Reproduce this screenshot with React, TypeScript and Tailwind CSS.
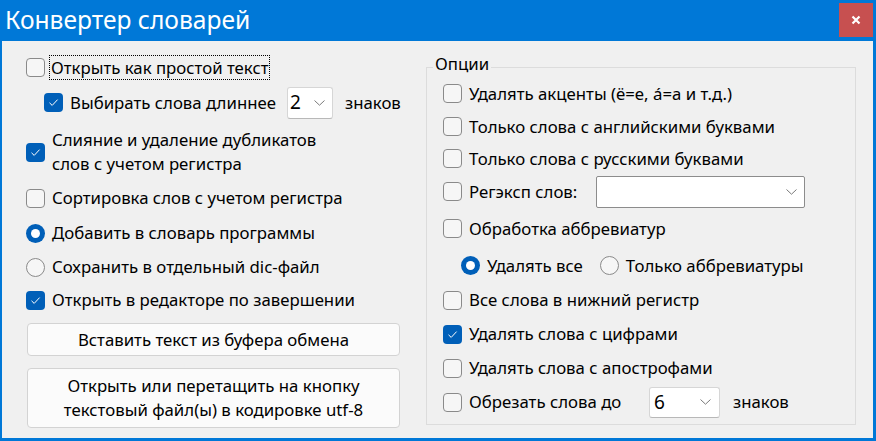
import React from "react"

const font = { fontFamily: '"Noto Sans", "Open Sans", sans-serif' }

function CheckBox({ checked = false }: { checked?: boolean }) {
  if (checked) {
    return (
      <span className="flex h-[19px] w-[19px] shrink-0 items-center justify-center rounded-[4px] bg-[#005fb8]">
        <svg width="11" height="9" viewBox="0 0 11 9" fill="none">
          <path d="M1.5 4.8 L4.2 7.4 L9.6 1.6" stroke="white" strokeWidth="1" />
        </svg>
      </span>
    )
  }
  return <span className="block h-[19px] w-[19px] shrink-0 rounded-[4px] border border-[#8a8a8a] bg-[#f6f6f6]" />
}

function Radio({ checked = false }: { checked?: boolean }) {
  if (checked) {
    return (
      <span className="flex h-[19px] w-[19px] shrink-0 items-center justify-center rounded-full bg-[#005fb8]">
        <span className="block h-[9px] w-[9px] rounded-full bg-white" />
      </span>
    )
  }
  return <span className="block h-[19px] w-[19px] shrink-0 rounded-full border border-[#8a8a8a] bg-[#f6f6f6]" />
}

function Chevron() {
  return (
    <svg width="11" height="6" viewBox="0 0 11 6" fill="none">
      <path d="M0.5 0.5 L5.5 5.2 L10.5 0.5" stroke="#7a7a7a" strokeWidth="1" />
    </svg>
  )
}

function Row({ h, children, className = "" }: { h: string; children: React.ReactNode; className?: string }) {
  return <div className={`flex items-center ${h} ${className}`}>{children}</div>
}

export default function App() {
  return (
    <div className="h-[441px] w-[876px] overflow-hidden bg-[#0078d7] text-[16.8px] text-black" style={font}>
      {/* title bar */}
      <div className="flex h-[41px] items-start justify-between">
        <div className="pl-[5px] pt-[3px] text-[24.6px] leading-[34px] text-white">Конвертер словарей</div>
        <div className="mr-[3px] mt-[3px] flex h-[34px] w-[34px] items-center justify-center bg-[#c75050]">
          <svg width="10" height="10" viewBox="0 0 10 10">
            <path d="M1.5 1.5 L8.5 8.5 M8.5 1.5 L1.5 8.5" stroke="white" strokeWidth="2.2" />
          </svg>
        </div>
      </div>

      {/* body */}
      <div className="ml-[2px] mr-[3px] flex h-[397px] bg-[#f0f0f0]">
        {/* left column */}
        <div className="flex w-[424px] flex-col pl-[24px]">
          <Row h="h-[25px] mt-[14px]" className="gap-[4px]">
            <CheckBox />
            <span className="border border-dotted border-black px-[1px] leading-[23px]">Открыть как простой текст</span>
          </Row>
          <Row h="h-[33px] mt-[6px]" className="pl-[18px]">
            <CheckBox checked />
            <span className="ml-[7px]">Выбирать слова длиннее</span>
            <div className="ml-[11px] flex h-[32px] w-[46px] items-center justify-between rounded-[3px] border border-[#d6d6d6] border-b-[#b8b8b8] bg-white pl-[2px] pr-[7px] text-[19px]">
              <span>2</span>
              <Chevron />
            </div>
            <span className="ml-[12px]">знаков</span>
          </Row>
          <Row h="h-[48px] mt-[9px]" className="gap-[7px]">
            <CheckBox checked />
            <span className="leading-[24px]">
              Слияние и удаление дубликатов
              <br />
              слов с учетом регистра
            </span>
          </Row>
          <Row h="h-[34px] mt-[5px]" className="gap-[7px]">
            <CheckBox />
            <span>Сортировка слов с учетом регистра</span>
          </Row>
          <Row h="h-[34px] mt-[1px]" className="gap-[7px]">
            <Radio checked />
            <span>Добавить в словарь программы</span>
          </Row>
          <Row h="h-[34px]" className="gap-[7px]">
            <Radio />
            <span>Сохранить в отдельный dic-файл</span>
          </Row>
          <Row h="h-[32px]" className="gap-[7px]">
            <CheckBox checked />
            <span>Открыть в редакторе по завершении</span>
          </Row>
          <button className="ml-[1px] mt-[7px] h-[33px] w-[373px] rounded-[4px] border border-[#d3d3d3] bg-[#fbfbfb]">
            Вставить текст из буфера обмена
          </button>
          <button className="ml-[1px] mt-[12px] h-[60px] w-[373px] rounded-[4px] border border-[#d3d3d3] bg-[#fbfbfb] leading-[24px]">
            Открыть или перетащить на кнопку
            <br />
            текстовый файл(ы) в кодировке utf-8
          </button>
        </div>

        {/* right column: group box */}
        <div className="relative mt-[26px] h-[358px] w-[430px] border border-[#dcdcdc]">
          <span className="absolute left-[6px] top-[-15px] bg-[#f0f0f0] px-[2px] leading-[22px]">Опции</span>
          <div className="flex flex-col pl-[16px] pt-[9px]">
            <Row h="h-[33px]" className="gap-[7px]">
              <CheckBox />
              <span>Удалять акценты (ё=е, á=а и т.д.)</span>
            </Row>
            <Row h="h-[33px]" className="gap-[7px]">
              <CheckBox />
              <span>Только слова с английскими буквами</span>
            </Row>
            <Row h="h-[31px]" className="gap-[7px]">
              <CheckBox />
              <span>Только слова с русскими буквами</span>
            </Row>
            <Row h="h-[35px]">
              <CheckBox />
              <span className="ml-[7px] w-[127px]">Регэксп слов:</span>
              <div className="flex h-[32px] w-[209px] items-center justify-end rounded-[2px] border border-[#8c8c8c] bg-white pr-[7px]">
                <Chevron />
              </div>
            </Row>
            <Row h="h-[39px]" className="gap-[7px]">
              <CheckBox />
              <span>Обработка аббревиатур</span>
            </Row>
            <Row h="h-[35px]" className="pl-[18px]">
              <Radio checked />
              <span className="ml-[7px]">Удалять все</span>
              <span className="ml-[17px]">
                <Radio />
              </span>
              <span className="ml-[7px]">Только аббревиатуры</span>
            </Row>
            <Row h="h-[34px]" className="gap-[7px]">
              <CheckBox />
              <span>Все слова в нижний регистр</span>
            </Row>
            <Row h="h-[34px]" className="gap-[7px]">
              <CheckBox checked />
              <span>Удалять слова с цифрами</span>
            </Row>
            <Row h="h-[34px]" className="gap-[7px]">
              <CheckBox />
              <span>Удалять слова с апострофами</span>
            </Row>
            <Row h="h-[34px]">
              <CheckBox />
              <span className="ml-[7px] w-[180px]">Обрезать слова до</span>
              <div className="flex h-[31px] w-[71px] items-center justify-between rounded-[3px] border border-[#d6d6d6] border-b-[#b8b8b8] bg-white pl-[4px] pr-[8px] text-[19px]">
                <span>6</span>
                <Chevron />
              </div>
              <span className="ml-[13px]">знаков</span>
            </Row>
          </div>
        </div>
      </div>
    </div>
  )
}
